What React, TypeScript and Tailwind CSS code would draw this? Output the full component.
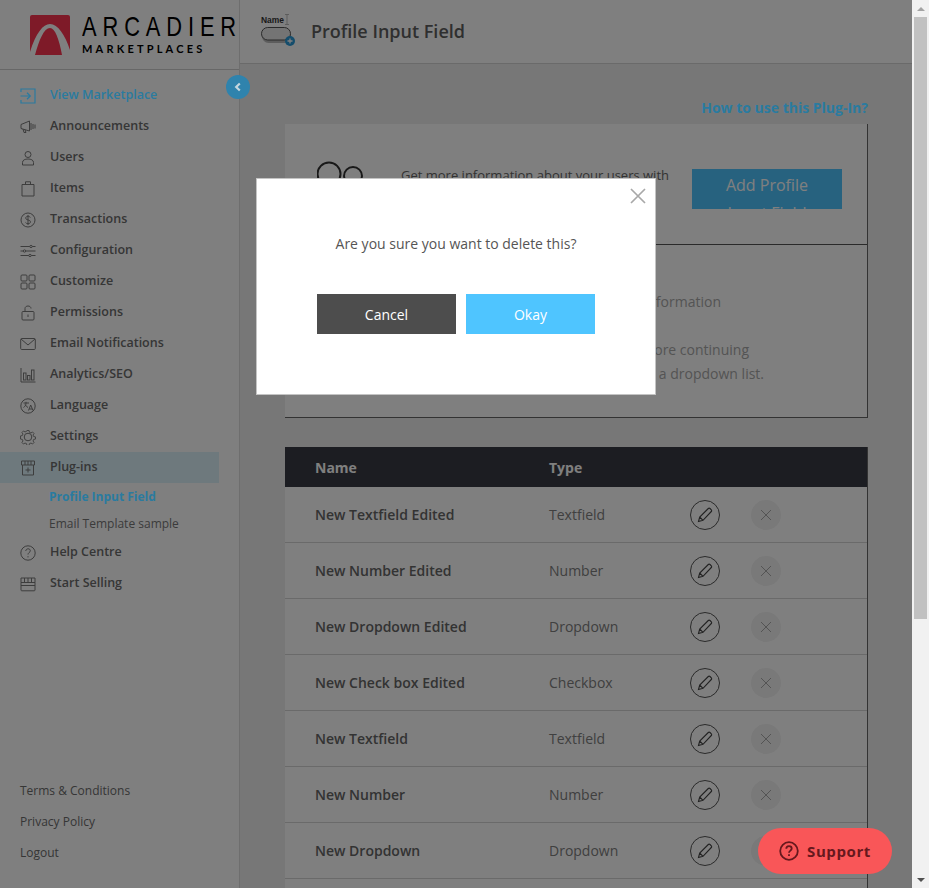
import React from "react";

const font = { fontFamily: '"Open Sans", sans-serif' };

function Ic({ children }: { children: React.ReactNode }) {
  return (
    <svg width="16" height="16" viewBox="0 0 16 16" fill="none" stroke="#7a7a7a" strokeWidth="1" className="shrink-0">
      {children}
    </svg>
  );
}

const icons: Record<string, React.ReactNode> = {
  view: (
    <svg width="16" height="16" viewBox="0 0 16 16" fill="none" stroke="#2a7ba0" strokeWidth="1.2" className="shrink-0">
      <path d="M1 4V1h14v14H1v-3M0.5 8H10M7 4.8 10.3 8 7 11.2" />
    </svg>
  ),
  ann: <Ic><path d="M1 5.5 9.5 2v10L1 9.5zM3 10l1 3.5h2L5 10.8M11 4v7M13 5v5M15 5.5v4" /></Ic>,
  users: <Ic><circle cx="8" cy="4.5" r="3" /><path d="M2.5 15v-2.5C2.5 10 5 9 8 9s5.500 1 5.500 3.500V15z" /></Ic>,
  items: <Ic><path d="M2 3.500h12V15H2zM5.500 3.500V.8h5v2.700" /></Ic>,
  trans: <Ic><circle cx="8" cy="8" r="7" /><path d="M10.300 5.500C9.800 4.600 9 4.300 8 4.300c-1.300 0-2.300.7-2.300 1.800C5.700 8.700 10.500 7.300 10.500 9.900c0 1.100-1.100 1.800-2.500 1.800-1.100 0-2-.4-2.500-1.300M8 3v10" /></Ic>,
  config: <Ic><path d="M0.500 3.500h15M0.500 8h15M0.500 12.500h15" /><circle cx="11" cy="3.500" r="1.200" fill="#fff" /><circle cx="4.500" cy="8" r="1.200" fill="#fff" /><circle cx="10" cy="12.500" r="1.200" fill="#fff" /></Ic>,
  custom: <Ic><rect x="1" y="1" width="6" height="6" rx="1" /><rect x="9" y="1" width="6" height="6" rx="1" /><rect x="1" y="9" width="6" height="6" rx="1" /><rect x="9" y="9" width="6" height="6" rx="1" /></Ic>,
  perm: <Ic><rect x="2" y="6.500" width="12" height="8.500" rx="1" /><path d="M5 6.500V3.500C5 2 6.300 1 8 1s3 1 3 2.500M8 9.500v2.500" /></Ic>,
  email: <Ic><rect x="0.700" y="2.500" width="14.600" height="11" rx="1" /><path d="M1 3 8 9l7-6" /></Ic>,
  analytics: <Ic><path d="M1 1v14h14.500" /><rect x="3.500" y="6" width="2.500" height="7" /><rect x="7.500" y="8.500" width="2.500" height="4.500" /><rect x="11.500" y="3" width="2.500" height="10" /></Ic>,
  lang: <Ic><circle cx="8" cy="8" r="7.200" /><path d="M3.500 5h5.500M6 3.800V5c0 2-1 3.500-2.500 4.500M5 6.500c.8 1.400 1.800 2.300 3 3M8.500 12.500l2.200-5.500 2.300 5.500M9.300 11h3" /></Ic>,
  settings: <Ic><circle cx="8" cy="8" r="3.800" /><path d="M6.800.8h2.400l.4 2 1.700.7 1.700-1.100 1.700 1.700-1.100 1.700.7 1.700 2 .4v2.400l-2 .4-.7 1.700 1.100 1.700-1.700 1.700-1.700-1.100-1.700.7-.4 2H6.800l-.4-2-1.700-.7-1.700 1.100-1.700-1.700 1.100-1.700-.7-1.700-2-.4V6.800l2-.4.7-1.700L1.300 3l1.700-1.700 1.700 1.100 1.700-.7z" transform="translate(.8 .8) scale(.9)" /></Ic>,
  plug: <Ic><path d="M1.500 1h13v4h-13zM2.500 5v10h11V5M5 1v4M8 1v4M11 1v4M8 7.500v5M5.500 10h5" /></Ic>,
  help: <Ic><circle cx="8" cy="8" r="7.200" /><path d="M5.800 6c0-1.300 1-2.200 2.300-2.200s2.200.8 2.200 2c0 1.700-2.300 1.700-2.300 3.700M8 11.200v1.200" /></Ic>,
  sell: <Ic><path d="M1 2h14v4.500H1zM1 6.500V14a.8.8 0 0 0 .8.8h12.400a.8.8 0 0 0 .8-.8V6.500M1 9.500h14M4.500 2v4.500M8 2v4.500M11.500 2v4.500" /></Ic>,
};

function NavItem({ icon, label, active, highlight }: { icon: string; label: string; active?: boolean; highlight?: boolean }) {
  return (
    <div className={`flex h-[31px] items-center gap-[14px] pl-[20px] ${highlight ? "w-[219px] bg-[#dcf3fb]" : ""}`}>
      <span className={active ? "relative z-20 flex" : "flex"}>{icons[icon]}</span>
      <span
        className={`text-[12.5px] font-semibold whitespace-nowrap ${active ? "relative z-20 text-[#2a7ba0]" : "text-[#6c6c6c]"}`}
      >
        {label}
      </span>
    </div>
  );
}

function Logo() {
  return (
    <div className="flex h-[69px] shrink-0 items-center gap-[12px] pl-[30px]">
      <svg width="40" height="40" viewBox="0 0 40 40" className="shrink-0">
        <rect width="40" height="40" rx="2" fill="#fc3450" />
        <path d="M0 37C6 18 13 9 20 9C28 9 35 20 40 35V40H32C29 24 25 13 20 13C14 13 9 25 5 40H0z" fill="#fff" />
      </svg>
      <div className="flex flex-col">
        <span
          className="origin-left scale-x-[0.78] text-[28px] leading-[26px] font-normal tracking-[0.27em] whitespace-nowrap text-black"
          style={{ fontFamily: '"Liberation Sans", sans-serif' }}
        >
          ARCADIER
        </span>
        <span
          className="mt-[2px] text-[11px] leading-[13px] font-bold tracking-[0.29em] whitespace-nowrap text-black"
          style={{ fontFamily: "Lato, sans-serif" }}
        >
          MARKETPLACES
        </span>
      </div>
    </div>
  );
}

function Sidebar() {
  return (
    <aside className="flex h-full w-[240px] shrink-0 flex-col border-r border-[#dddddd] bg-white">
      <Logo />
      <div className="h-px shrink-0 bg-[#cfcfcf]" />
      <nav className="pt-[10px]">
        <NavItem icon="view" label="View Marketplace" active />
        <NavItem icon="ann" label="Announcements" />
        <NavItem icon="users" label="Users" />
        <NavItem icon="items" label="Items" />
        <NavItem icon="trans" label="Transactions" />
        <NavItem icon="config" label="Configuration" />
        <NavItem icon="custom" label="Customize" />
        <NavItem icon="perm" label="Permissions" />
        <NavItem icon="email" label="Email Notifications" />
        <NavItem icon="analytics" label="Analytics/SEO" />
        <NavItem icon="lang" label="Language" />
        <NavItem icon="settings" label="Settings" />
        <NavItem icon="plug" label="Plug-ins" highlight />
        <div className="relative z-20 flex h-[27px] items-center pl-[49px] text-[12px] font-bold text-[#2a7ba0]">Profile Input Field</div>
        <div className="flex h-[27px] items-center pl-[49px] text-[12px] text-[#777777]">Email Template sample</div>
        <NavItem icon="help" label="Help Centre" />
        <NavItem icon="sell" label="Start Selling" />
      </nav>
      <div className="mt-auto pb-[20px] pl-[20px] text-[12px] text-[#6c6c6c]">
        <div className="flex h-[31px] items-center">Terms &amp; Conditions</div>
        <div className="flex h-[31px] items-center">Privacy Policy</div>
        <div className="flex h-[31px] items-center">Logout</div>
      </div>
    </aside>
  );
}

function NameIcon() {
  return (
    <svg width="38" height="38" viewBox="0 0 38 38" className="shrink-0">
      <text x="1" y="10" fontSize="9.500" fontWeight="700" fill="#333" textLength="23" lengthAdjust="spacingAndGlyphs" style={{ fontFamily: '"Liberation Sans", sans-serif' }}>
        Name
      </text>
      <path d="M25 1.500h4M27 1.500v10M25 11.500h4" stroke="#aaa" strokeWidth="0.800" fill="none" />
      <rect x="2" y="17" width="29" height="13" rx="6.500" fill="#bbb" />
      <rect x="1.500" y="14.500" width="29" height="12.500" rx="6.200" fill="#e8e8e8" stroke="#555" strokeWidth="1" />
      <circle cx="30" cy="28" r="5" fill="#2a9bd8" />
      <path d="M30 25.500v5M27.500 28h5" stroke="#fff" strokeWidth="1.300" />
    </svg>
  );
}

const rows = [
  ["New Textfield Edited", "Textfield"],
  ["New Number Edited", "Number"],
  ["New Dropdown Edited", "Dropdown"],
  ["New Check box Edited", "Checkbox"],
  ["New Textfield", "Textfield"],
  ["New Number", "Number"],
  ["New Dropdown", "Dropdown"],
];

function Row({ name, type }: { name: string; type: string }) {
  return (
    <div className="flex h-[56px] shrink-0 items-center border-b border-[#d4d4d4] pl-[30px] text-[14px]">
      <span className="w-[234px] font-semibold text-[#666666]">{name}</span>
      <span className="w-[141px] text-[#808080]">{type}</span>
      <span className="flex h-[30px] w-[30px] items-center justify-center rounded-full border border-[#555555]">
        <svg width="18" height="18" viewBox="0 0 18 18" fill="none" stroke="#444" strokeWidth="1.100">
          <path d="M2.500 15.500 3.700 11 12.300 2.500a1.200 1.200 0 0 1 1.700 0l1.300 1.300a1.200 1.200 0 0 1 0 1.700L7 14.300zM3.700 11 7 14.300" />
        </svg>
      </span>
      <span className="ml-[31px] flex h-[30px] w-[30px] items-center justify-center rounded-full bg-[#f2f2f2]">
        <svg width="12" height="12" viewBox="0 0 12 12" stroke="#a8a8a8" strokeWidth="1">
          <path d="M1 1 11 11M11 1 1 11" />
        </svg>
      </span>
    </div>
  );
}

function Content() {
  return (
    <main className="flex h-full min-w-0 flex-1 flex-col bg-[#eeeeee]">
      <header className="flex h-[64px] shrink-0 items-center gap-[13px] border-b border-[#d4d4d4] bg-white pl-[20px]">
        <div className="flex pt-[1px]"><NameIcon /></div>
        <h1 className="text-[18px] font-semibold text-[#5e5e5e]">Profile Input Field</h1>
      </header>
      <div className="flex min-h-0 flex-1 flex-col overflow-hidden pr-[44px] pl-[45px]">
        <div className="relative z-20 flex h-[60px] shrink-0 items-end justify-end pb-[6px] text-[14px] font-bold text-[#2a7ba0]">
          How to use this Plug-In?
        </div>
        <section className="h-[294px] shrink-0 border-r border-b border-[#666666] bg-white">
          <div className="flex h-[121px] border-b border-[#555555] pl-[32px]">
            <svg width="46" height="40" viewBox="0 0 46 40" fill="none" stroke="#333" strokeWidth="2" className="mt-[37px] shrink-0">
              <circle cx="12" cy="13" r="11.500" />
              <circle cx="36" cy="15" r="9" />
            </svg>
            <p className="mt-[41px] ml-[38px] w-[276px] shrink-0 text-[13px] leading-[20px] text-[#666666]">
              Get more information about your users with custom profile fields.
            </p>
            <button className="mt-[45px] ml-[15px] h-[40px] w-[150px] shrink-0 overflow-hidden bg-[#4fc5ff] px-[20px] text-[16px] leading-[28px] text-white">
              <span className="block pt-[2px]">Add Profile Input Field</span>
            </button>
          </div>
          <div className="pt-[45px] text-[14px] leading-[24px] whitespace-nowrap text-[#a8a8a8]">
            <p className="w-[436px] text-right">Use profile fields to collect more user information</p>
            <p className="h-[24px]" />
            <p className="w-[464px] text-right">Please check your saved field types before continuing</p>
            <p className="w-[479px] text-right">Options can be added by using a dropdown list.</p>
          </div>
        </section>
        <section className="mt-[29px] flex min-h-0 flex-1 flex-col border-r border-[#666666] bg-white">
          <div className="flex h-[40px] shrink-0 items-center bg-[#393a44] pl-[30px] text-[14px] font-bold text-white">
            <span className="w-[234px]">Name</span>
            <span>Type</span>
          </div>
          {rows.map((r) => (
            <Row key={r[0]} name={r[0]} type={r[1]} />
          ))}
        </section>
      </div>
    </main>
  );
}

function Modal() {
  return (
    <div className="absolute top-[178px] left-[256px] z-30 h-[217px] w-[400px] border border-[#c4c4c4] bg-white">
      <button className="absolute top-[9px] right-[9px] flex h-[16px] w-[16px] items-center justify-center">
        <svg width="16" height="16" viewBox="0 0 16 16" stroke="#a8a8a8" strokeWidth="1.700">
          <path d="M1 1 15 15M15 1 1 15" />
        </svg>
      </button>
      <p className="pt-[55px] text-center text-[14px] leading-[20px] text-[#555555]">Are you sure you want to delete this?</p>
      <div className="mt-[40px] flex justify-center gap-[10px] text-[14px] text-white">
        <button className="h-[40px] w-[139px] bg-[#4d4d4d]">Cancel</button>
        <button className="h-[40px] w-[129px] bg-[#4fc5ff]">Okay</button>
      </div>
    </div>
  );
}

function Scrollbar() {
  return (
    <div className="flex h-full w-[17px] shrink-0 flex-col items-center bg-[#f1f1f1]">
      <div className="flex h-[17px] shrink-0 items-center justify-center">
        <div className="h-0 w-0 border-x-[4px] border-b-[4px] border-x-transparent border-b-[#a3a3a3]" />
      </div>
      <div className="h-[602px] w-[13px] shrink-0 bg-[#c1c1c1]" />
      <div className="mt-auto flex h-[17px] shrink-0 items-center justify-center">
        <div className="h-0 w-0 border-x-[4px] border-t-[4px] border-x-transparent border-t-[#505050]" />
      </div>
    </div>
  );
}

export default function App() {
  return (
    <div className="flex h-[888px] w-[929px] overflow-hidden" style={font}>
      <div className="relative flex h-full w-[912px] shrink-0">
        <Sidebar />
        <Content />
        <div className="absolute inset-0 z-10 bg-black/50" />
        <button className="absolute top-[75px] left-[226px] z-20 flex h-[24px] w-[24px] items-center justify-center rounded-full bg-[#2f83ad]">
          <svg width="10" height="10" viewBox="0 0 10 10" fill="none" stroke="#c4d6df" strokeWidth="2.200">
            <path d="M6.800 1.500 3.200 5l3.600 3.500" />
          </svg>
        </button>
        <Modal />
        <button className="absolute top-[828px] left-[758px] z-30 flex h-[46px] w-[134px] items-center justify-center gap-[8px] rounded-full bg-[#f95658] text-[15px] font-bold tracking-[0.04em] text-[#66181d]">
          <svg width="20" height="20" viewBox="0 0 20 20" fill="none" stroke="#66181d" strokeWidth="1.800">
            <circle cx="10" cy="10" r="8.800" />
            <path d="M7.300 7.800C7.300 6.200 8.500 5.200 10 5.200s2.700 1 2.700 2.400c0 2-2.700 2-2.700 4.200M10 13.300v1.700" />
          </svg>
          Support
        </button>
      </div>
      <Scrollbar />
    </div>
  );
}
